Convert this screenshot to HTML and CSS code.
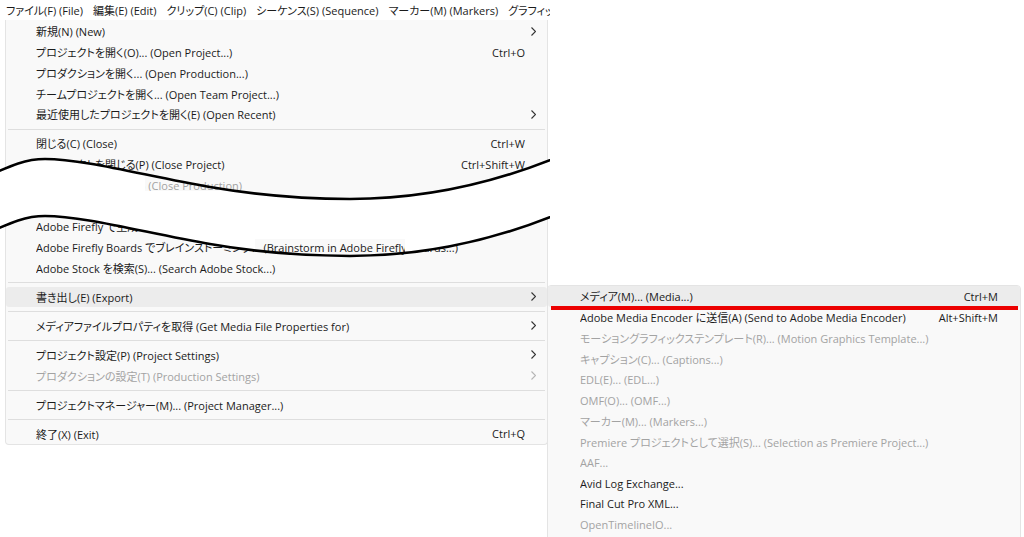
FILE: index.html
```html
<!DOCTYPE html>
<html lang="ja">
<head>
    <meta charset="UTF-8">
    <meta name="viewport" content="width=device-width, initial-scale=1.0">
    <title>ファイル &gt; 書き出し</title>
    <link rel="stylesheet" href="styles.css">
</head>
<body>
    <div class="page">
        <!-- Capture de la barre de menus + menu Fichier -->
        <div class="capture">
            <div class="menubar">
                <span>ファイル(F) (File)</span>
                <span>編集(E) (Edit)</span>
                <span>クリップ(C) (Clip)</span>
                <span>シーケンス(S) (Sequence)</span>
                <span>マーカー(M) (Markers)</span>
                <span>グラフィックとタイトル(G) (Graphics and Titles)</span>
            </div>

            <div class="menu file-menu">
                <div class="item"><span class="label">新規(N) (New)</span><span class="key"></span><span class="arrow"><svg width="5" height="9" viewBox="0 0 5 9"><polyline points="0.5,0.5 4.5,4.5 0.5,8.5"/></svg></span></div>
                <div class="item"><span class="label">プロジェクトを開く(O)... (Open Project...)</span><span class="key">Ctrl+O</span><span class="arrow"></span></div>
                <div class="item"><span class="label">プロダクションを開く... (Open Production...)</span><span class="key"></span><span class="arrow"></span></div>
                <div class="item"><span class="label">チームプロジェクトを開く... (Open Team Project...)</span><span class="key"></span><span class="arrow"></span></div>
                <div class="item"><span class="label">最近使用したプロジェクトを開く(E) (Open Recent)</span><span class="key"></span><span class="arrow"><svg width="5" height="9" viewBox="0 0 5 9"><polyline points="0.5,0.5 4.5,4.5 0.5,8.5"/></svg></span></div>
                <div class="sep"></div>
                <div class="item"><span class="label">閉じる(C) (Close)</span><span class="key">Ctrl+W</span><span class="arrow"></span></div>
                <div class="item"><span class="label">プロジェクトを閉じる(P) (Close Project)</span><span class="key">Ctrl+Shift+W</span><span class="arrow"></span></div>
                <div class="item off"><span class="label">プロダクションを閉じる (Close Production)</span><span class="key"></span><span class="arrow"></span></div>
                <div class="item"></div>
                <div class="item"><span class="label">Adobe Firefly で生成... (Generate with Adobe Firefly...)</span><span class="key"></span><span class="arrow"></span></div>
                <div class="item"><span class="label">Adobe Firefly Boards でブレインストーミング... (Brainstorm in Adobe Firefly Boards...)</span><span class="key"></span><span class="arrow"></span></div>
                <div class="item"><span class="label">Adobe Stock を検索(S)... (Search Adobe Stock...)</span><span class="key"></span><span class="arrow"></span></div>
                <div class="sep"></div>
                <div class="item hover"><span class="label">書き出し(E) (Export)</span><span class="key"></span><span class="arrow"><svg width="5" height="9" viewBox="0 0 5 9"><polyline points="0.5,0.5 4.5,4.5 0.5,8.5"/></svg></span></div>
                <div class="sep"></div>
                <div class="item"><span class="label">メディアファイルプロパティを取得 (Get Media File Properties for)</span><span class="key"></span><span class="arrow"><svg width="5" height="9" viewBox="0 0 5 9"><polyline points="0.5,0.5 4.5,4.5 0.5,8.5"/></svg></span></div>
                <div class="sep"></div>
                <div class="item"><span class="label">プロジェクト設定(P) (Project Settings)</span><span class="key"></span><span class="arrow"><svg width="5" height="9" viewBox="0 0 5 9"><polyline points="0.5,0.5 4.5,4.5 0.5,8.5"/></svg></span></div>
                <div class="item off"><span class="label">プロダクションの設定(T) (Production Settings)</span><span class="key"></span><span class="arrow"><svg width="5" height="9" viewBox="0 0 5 9"><polyline points="0.5,0.5 4.5,4.5 0.5,8.5"/></svg></span></div>
                <div class="sep"></div>
                <div class="item"><span class="label">プロジェクトマネージャー(M)... (Project Manager...)</span><span class="key"></span><span class="arrow"></span></div>
                <div class="sep"></div>
                <div class="item"><span class="label">終了(X) (Exit)</span><span class="key">Ctrl+Q</span><span class="arrow"></span></div>
            </div>

            <!-- Coupure ondulée par-dessus le menu -->
            <svg class="tear" width="550" height="446" viewBox="0 0 550 446">
                <defs>
                    <mask id="tearMask">
                        <rect x="0" y="0" width="550" height="446" fill="#fff"/>
                        <rect x="145" y="150" width="100" height="41" fill="#000"/>
                        <rect x="255" y="239" width="150" height="22" fill="#000"/>
                    </mask>
                </defs>
                <path class="tear-fill" mask="url(#tearMask)" d="M -10 175 C 10 166, 25 159, 45 159 C 85 159, 150 177, 210 187 C 250 194, 300 199, 350 199 C 420 199, 490 185, 560 156 L 560 213 C 490 242, 420 256, 350 256 C 300 256, 250 251, 210 244 C 150 234, 85 216, 45 216 C 25 216, 10 223, -10 232 Z"/>
                <path class="tear-line" d="M -10 175 C 10 166, 25 159, 45 159 C 85 159, 150 177, 210 187 C 250 194, 300 199, 350 199 C 420 199, 490 185, 560 156"/>
                <path class="tear-line" d="M -10 232 C 10 223, 25 216, 45 216 C 85 216, 150 234, 210 244 C 250 251, 300 256, 350 256 C 420 256, 490 242, 560 213"/>
            </svg>
        </div>

        <!-- Sous-menu Exporter -->
        <div class="menu submenu">
            <div class="item hover mark"><span class="label">メディア(M)... (Media...)</span><span class="key">Ctrl+M</span><span class="arrow"></span></div>
            <div class="item"><span class="label">Adobe Media Encoder に送信(A) (Send to Adobe Media Encoder)</span><span class="key">Alt+Shift+M</span><span class="arrow"></span></div>
            <div class="item off"><span class="label">モーショングラフィックステンプレート(R)... (Motion Graphics Template...)</span><span class="key"></span><span class="arrow"></span></div>
            <div class="item off"><span class="label">キャプション(C)... (Captions...)</span><span class="key"></span><span class="arrow"></span></div>
            <div class="item off"><span class="label">EDL(E)... (EDL...)</span><span class="key"></span><span class="arrow"></span></div>
            <div class="item off"><span class="label">OMF(O)... (OMF...)</span><span class="key"></span><span class="arrow"></span></div>
            <div class="item off"><span class="label">マーカー(M)... (Markers...)</span><span class="key"></span><span class="arrow"></span></div>
            <div class="item off"><span class="label">Premiere プロジェクトとして選択(S)... (Selection as Premiere Project...)</span><span class="key"></span><span class="arrow"></span></div>
            <div class="item off"><span class="label">AAF...</span><span class="key"></span><span class="arrow"></span></div>
            <div class="item"><span class="label">Avid Log Exchange...</span><span class="key"></span><span class="arrow"></span></div>
            <div class="item"><span class="label">Final Cut Pro XML...</span><span class="key"></span><span class="arrow"></span></div>
            <div class="item off"><span class="label">OpenTimelineIO...</span><span class="key"></span><span class="arrow"></span></div>
        </div>
    </div>
</body>
</html>
```

FILE: styles.css
```css
body {
    margin: 0;
    padding: 0;
    background-color: #fff;
    color: #1b1b1b;
    font-family: "Open Sans", "Noto Sans CJK JP", sans-serif;
    font-size: 11px;
    font-feature-settings: "palt";
}
.page {
    display: flex;
    align-items: flex-start;
    width: 1024px;
    height: 537px;
    overflow: hidden;
}
.capture {
    position: relative;
    width: 550px;
    height: 446px;
    flex-shrink: 0;
    overflow: hidden;
}
.menubar {
    display: flex;
    gap: 10px;
    height: 20px;
    padding-left: 6px;
    align-items: center;
    white-space: nowrap;
}
.menu {
    background-color: #f9f9f9;
    border: 1px solid #e4e4e4;
}
.file-menu {
    width: 541px;
    margin-left: 5px;
    border-top: none;
    padding-top: 1px;
    border-radius: 0 0 4px 4px;
}
.submenu {
    width: 472px;
    margin-top: 285px;
    margin-left: -3px;
    padding-bottom: 12px;
    flex-shrink: 0;
    border-radius: 4px 4px 0 0;
}
.item {
    position: relative;
    display: grid;
    grid-template-columns: 1fr auto 22px;
    align-items: center;
    height: 20.75px;
    padding-left: 30px;
    white-space: nowrap;
}
.submenu .item {
    padding-left: 32px;
}
.label {
    overflow: hidden;
}
.key {
    text-align: right;
}
.arrow {
    display: flex;
    align-items: center;
    padding-left: 6px;
}
.arrow svg polyline {
    fill: none;
    stroke: #333;
    stroke-width: 1.1;
}
.item.off {
    color: #a3a3a3;
}
.item.off .arrow svg polyline {
    stroke: #b5b5b5;
}
.item.hover {
    background-color: #ececec;
    border-radius: 3px;
}
/* trait rouge sous l'entrée sélectionnée */
.item.mark::after {
    content: "";
    position: absolute;
    left: 3px;
    right: 2px;
    bottom: -3.5px;
    height: 4px;
    background-color: #ec0000;
}
.sep {
    height: 1px;
    margin: 4px 2px 3.25px;
    background-color: #dedede;
}
.tear {
    position: absolute;
    left: 0;
    top: 0;
    pointer-events: none;
}
.tear-fill {
    fill: #fff;
}
.tear-line {
    fill: none;
    stroke: #000;
    stroke-width: 2.6;
}
```
